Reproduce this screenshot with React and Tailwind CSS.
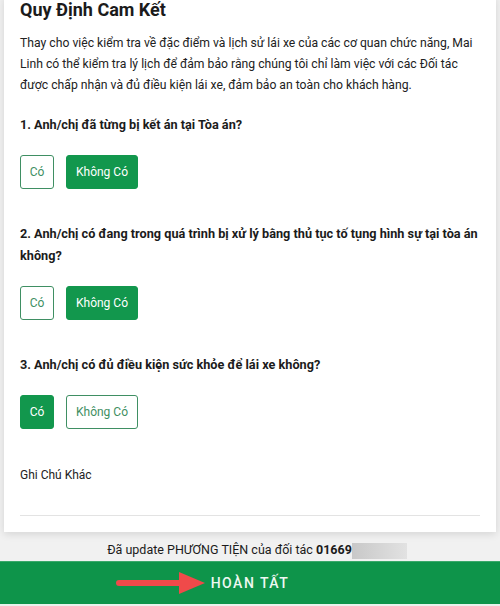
import { useState } from 'react';

const questions = [
  { id: 1, text: '1. Anh/chị đã từng bị kết án tại Tòa án?', answer: 'no' },
  { id: 2, text: '2. Anh/chị có đang trong quá trình bị xử lý bằng thủ tục tố tụng hình sự tại tòa án không?', answer: 'no' },
  { id: 3, text: '3. Anh/chị có đủ điều kiện sức khỏe để lái xe không?', answer: 'yes' },
];

function Choice({ active, onClick, children, className = '' }) {
  return (
    <button
      type="button"
      onClick={onClick}
      className={
        'h-[34px] rounded-[3px] border text-[12px] ' + className + ' ' +
        (active
          ? 'bg-[#12974d] border-[#12974d] text-white'
          : 'bg-white border-[#3f8f63] text-[#3f8f63]')
      }
    >
      {children}
    </button>
  );
}

export default function App() {
  const [answers, setAnswers] = useState(
    Object.fromEntries(questions.map(q => [q.id, q.answer]))
  );
  const set = (id, v) => setAnswers(prev => ({ ...prev, [id]: v }));

  return (
    <div className="w-[500px] h-[606px] overflow-hidden bg-[#f1f1f1] flex flex-col" style={{ fontFamily: 'Roboto, "Noto Sans", sans-serif' }}>
      <div className="mx-[4px] -mt-[4px] bg-white shadow-[0_2px_8px_rgba(0,0,0,0.12)] px-[16px] pb-[16px]">
        <h1 className="text-[18px] font-bold text-[#1b1b1b] leading-[24px] pt-[2px]">Quy Định Cam Kết</h1>
        <p className="mt-[11px] text-[12.2px] leading-[21px] text-[#222]">
          Thay cho việc kiểm tra về đặc điểm và lịch sử lái xe của các cơ quan chức năng, Mai Linh có thể kiểm tra lý lịch để đảm bảo rằng chúng tôi chỉ làm việc với các Đối tác được chấp nhận và đủ điều kiện lái xe, đảm bảo an toàn cho khách hàng.
        </p>

        {questions.map((q, i) => (
          <div key={q.id} className={i === 0 ? 'mt-[18px]' : 'mt-[34px]'}>
            <p className="text-[12.7px] leading-[22px] font-bold text-[#1b1b1b]">{q.text}</p>
            <div className="flex gap-[12px] mt-[19px]">
              <Choice className="w-[34px]" active={answers[q.id] === 'yes'} onClick={() => set(q.id, 'yes')}>Có</Choice>
              <Choice className="w-[72px]" active={answers[q.id] === 'no'} onClick={() => set(q.id, 'no')}>Không Có</Choice>
            </div>
          </div>
        ))}

        <p className="mt-[37px] text-[12px] leading-[18px] text-[#222]">Ghi Chú Khác</p>
        <div className="mt-[31px] border-b border-[#e3e3e3]" />
      </div>

      <p className="mt-[8px] pl-[14px] text-center text-[12.5px] text-[#1b1b1b] leading-[20px]">
        Đã update PHƯƠNG TIỆN của đối tác <b>01669</b>
        <span className="inline-block align-middle w-[55px] h-[16px] bg-gradient-to-r from-[#c8c8c8] to-[#e2e2e2]" />
      </p>

      <button type="button" className="relative mt-[1px] h-[43px] w-full shrink-0 bg-[#0e944a] border-t border-[#3aa86a] flex items-center justify-center">
        <svg className="absolute left-[115px] top-[9px]" width="92" height="24" viewBox="0 0 92 24">
          <path d="M4 12 H70" stroke="#ef4a4a" strokeWidth="6" strokeLinecap="round" />
          <path d="M64 1 L90 12 L64 23 Z" fill="#ef4a4a" />
        </svg>
        <span className="text-[#eef8f2] text-[14px] tracking-[1.5px] font-medium">HOÀN TẤT</span>
      </button>
      <div className="flex-1 bg-[#e8f3ec]" />
    </div>
  );
}
